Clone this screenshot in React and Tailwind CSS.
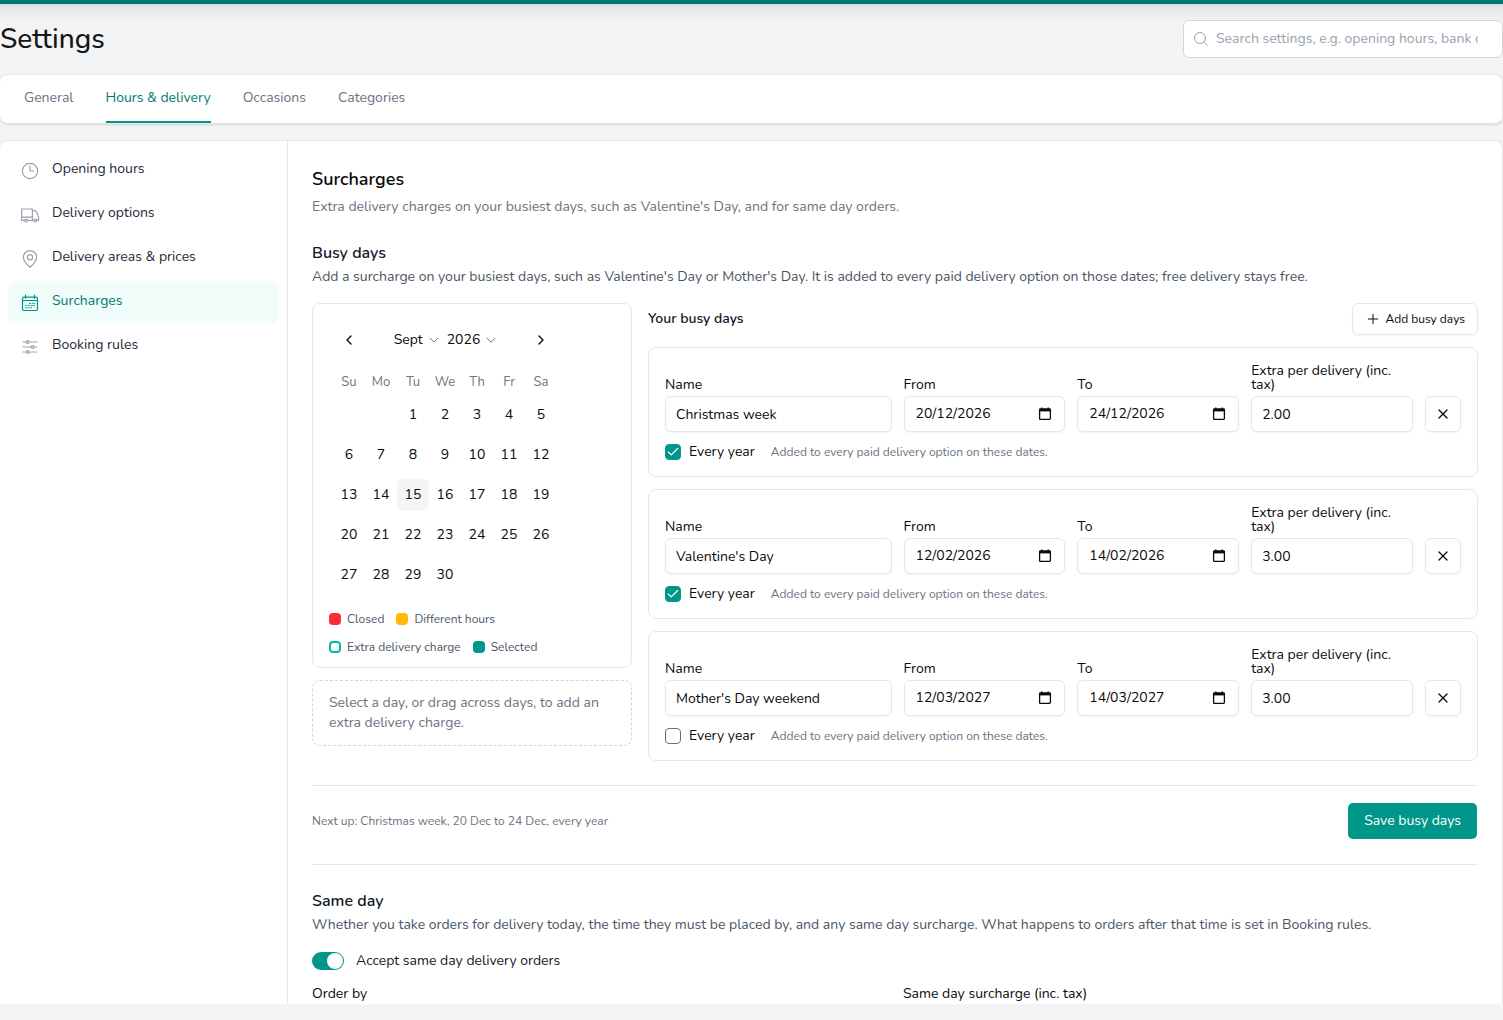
import React, { useState } from "react";
import { Check, ChevronLeft, ChevronRight, Plus, X } from "lucide-react";

const tabs = ["General", "Hours & delivery", "Occasions", "Categories"];

const ClockIcon = () => (
    <>
        <circle cx="10" cy="10" r="7.7" />
        <path d="M10 5.2V10h3.6" />
    </>
);

const TruckIcon = () => (
    <>
        <path d="M4.6 15.4H1.7V4h10.7v11.4H7.6" />
        <path d="M1.7 12.2h10.7" />
        <path d="M12.4 5.6h2c1 0 1.8.6 2.2 1.6l1.9 4.6v3.6h-1.7M13.8 15.4h-1.4" />
        <circle cx="6.1" cy="15.6" r="1.4" />
        <circle cx="15.3" cy="15.6" r="1.4" />
    </>
);

const PinIcon = () => (
    <>
        <path d="M10 18.2c-1.4-1.2-6.6-6.2-6.6-10a6.6 6.6 0 0 1 13.2 0c0 3.8-5.2 8.8-6.6 10z" />
        <circle cx="10" cy="8.2" r="2.6" />
    </>
);

const CalendarIcon = () => (
    <>
        <rect x="2.5" y="4.2" width="15" height="13.3" rx="1.6" />
        <path d="M2.5 7.5h15M5.5 2.2v3M14.5 2.2v3" />
        <path d="M9.5 10.4h5.5M6 12.6h8.5M5.5 14.8h6" strokeWidth="1" strokeDasharray="1 1.6" />
    </>
);

const SlidersIcon = () => (
    <>
        <path d="M3 5h3.4M9 5h8M3 10h8.4M14 10h3M3 15h3.4M9 15h8" />
        <circle cx="7.7" cy="5" r="1.3" />
        <circle cx="12.7" cy="10" r="1.3" />
        <circle cx="7.7" cy="15" r="1.3" />
    </>
);

const sections = [
    { label: "Opening hours", Icon: ClockIcon },
    { label: "Delivery options", Icon: TruckIcon },
    { label: "Delivery areas & prices", Icon: PinIcon },
    { label: "Surcharges", Icon: CalendarIcon },
    { label: "Booking rules", Icon: SlidersIcon },
];

const weekdays = ["Su", "Mo", "Tu", "We", "Th", "Fr", "Sa"];

// September 2026 starts on a Tuesday
const weeks = Array.from({ length: 5 }, (_, w) =>
    Array.from({ length: 7 }, (_, d) => {
        const day = w * 7 + d - 1;
        return day >= 1 && day <= 30 ? day : null;
    })
);
const today = 15;

const initialDays = [
    { id: 1, name: "Christmas week", from: "20/12/2026", to: "24/12/2026", extra: "2.00", everyYear: true },
    { id: 2, name: "Valentine's Day", from: "12/02/2026", to: "14/02/2026", extra: "3.00", everyYear: true },
    { id: 3, name: "Mother's Day weekend", from: "12/03/2027", to: "14/03/2027", extra: "3.00", everyYear: false },
];

const boxClass = "h-9 w-full min-w-0 rounded-md border border-gray-200 bg-white text-sm text-neutral-950 shadow-xs";
const inputClass = boxClass + " px-2.5";

const Field = ({ id, label, children }) => (
    <div className="flex min-w-0 flex-col gap-1">
        <label htmlFor={id} className="text-sm leading-[14px] text-neutral-950">{label}</label>
        {children}
    </div>
);

const DateInput = ({ id, value, onChange }) => (
    <div className="relative">
        <input id={id} type="text" value={value} onChange={onChange} className={boxClass + " pr-9 pb-0.5 pl-[11px]"} />
        <button type="button" aria-label="Open date picker" className="absolute top-2.5 right-3">
            <svg viewBox="0 0 16 16" className="size-4" fill="none" stroke="#0a0a0a">
                <rect x="2.6" y="3" width="10.8" height="10.4" rx="0.8" strokeWidth="1.3" />
                <path d="M2.6 4.2h10.8" strokeWidth="2.4" />
                <path d="M4.8 1.6v2M11.2 1.6v2" strokeWidth="1.4" />
            </svg>
        </button>
    </div>
);

const CalendarSelect = ({ label, value }) => (
    <span className="relative flex items-center">
        <select aria-label={label} defaultValue={value} className="field-sizing-content appearance-none bg-transparent pr-4 text-sm">
            <option>{value}</option>
        </select>
        <svg viewBox="0 0 10 10" className="pointer-events-none absolute right-0 size-2.5" fill="none" stroke="#737373" strokeLinecap="round" strokeLinejoin="round">
            <path d="M1 3.2l4 4 4-4" />
        </svg>
    </span>
);

const MonthCalendar = () => (
    <div className="p-5">
        <div className="flex h-8 w-56 items-center justify-between">
            <button type="button" aria-label="Previous month" className="flex size-8 items-center justify-center">
                <ChevronLeft className="size-4" />
            </button>
            <div className="flex items-center gap-2">
                <CalendarSelect label="Month" value="Sept" />
                <CalendarSelect label="Year" value="2026" />
            </div>
            <button type="button" aria-label="Next month" className="flex size-8 items-center justify-center">
                <ChevronRight className="size-4" />
            </button>
        </div>
        <table className="mt-[17px] block w-56">
            <thead className="block">
                <tr className="flex">
                    {weekdays.map((d) => (
                        <th key={d} className="w-8 text-[13px] leading-[18px] font-normal text-neutral-500">{d}</th>
                    ))}
                </tr>
            </thead>
            <tbody className="block">
                {weeks.map((week, i) => (
                    <tr key={i} className="mt-2 flex">
                        {week.map((day, j) => (
                            <td key={j} className="size-8 p-0">
                                {day && (
                                    <button type="button" className={"size-8 rounded-md text-sm " + (day === today ? "bg-neutral-100" : "")}>
                                        {day}
                                    </button>
                                )}
                            </td>
                        ))}
                    </tr>
                ))}
            </tbody>
        </table>
    </div>
);

const Legend = ({ swatch, label }) => (
    <span className="flex items-center gap-1.5">
        <span className={"size-3 rounded-sm " + swatch}></span>
        {label}
    </span>
);

const BusyDay = ({ day, onUpdate, onRemove }) => {
    const id = "busy-" + day.id;
    return (
        <div className="rounded-lg border border-gray-200 p-4">
            <div className="grid grid-cols-[1.4fr_1fr_1fr_1fr_36px] items-end gap-3">
                <Field id={id + "-name"} label="Name">
                    <input id={id + "-name"} type="text" value={day.name} onChange={(e) => onUpdate({ name: e.target.value })} className={inputClass} />
                </Field>
                <Field id={id + "-from"} label="From">
                    <DateInput id={id + "-from"} value={day.from} onChange={(e) => onUpdate({ from: e.target.value })} />
                </Field>
                <Field id={id + "-to"} label="To">
                    <DateInput id={id + "-to"} value={day.to} onChange={(e) => onUpdate({ to: e.target.value })} />
                </Field>
                <Field id={id + "-extra"} label="Extra per delivery (inc. tax)">
                    <input id={id + "-extra"} type="text" inputMode="decimal" value={day.extra} onChange={(e) => onUpdate({ extra: e.target.value })} className={inputClass} />
                </Field>
                <button type="button" aria-label={"Remove " + day.name} onClick={onRemove} className="flex size-9 items-center justify-center rounded-md border border-gray-200 shadow-xs">
                    <X className="size-4" strokeWidth={1.8} />
                </button>
            </div>
            <div className="mt-3 flex h-4 items-center gap-4">
                <label className="flex items-center gap-2 text-sm leading-4 text-neutral-950">
                    <span className="relative size-4">
                        <input
                            type="checkbox"
                            checked={day.everyYear}
                            onChange={(e) => onUpdate({ everyYear: e.target.checked })}
                            className="block size-4 appearance-none rounded-sm border border-gray-500 bg-white checked:border-teal-600 checked:bg-teal-600"
                        />
                        {day.everyYear && <Check className="pointer-events-none absolute top-px left-px size-3.5 text-white" />}
                    </span>
                    Every year
                </label>
                <span className="text-xs text-gray-500">Added to every paid delivery option on these dates.</span>
            </div>
        </div>
    );
};

const App = () => {
    const [tab, setTab] = useState("Hours & delivery");
    const [days, setDays] = useState(initialDays);
    const [sameDay, setSameDay] = useState(true);

    const updateDay = (id, values) => {
        setDays((prev) => prev.map((d) => (d.id === id ? { ...d, ...values } : d)));
    };

    const addDay = () => {
        setDays((prev) => [...prev, { id: Date.now(), name: "", from: "", to: "", extra: "", everyYear: false }]);
    };

    return (
        <div className="flex h-screen flex-col bg-gray-100 pb-4 font-['Nunito','Lato',sans-serif] text-neutral-950">
            <div className="h-1 shrink-0 bg-teal-700"></div>

            <header className="flex shrink-0 items-center justify-between bg-[linear-gradient(#dcdee0,#e6e8ea_5px,#f3f4f6_20px)] py-4">
                <h1 className="text-[28px] leading-9 font-medium text-neutral-900">Settings</h1>
                <div className="relative w-80">
                    <svg viewBox="0 0 16 16" className="absolute top-[11px] left-[10px] size-4" fill="none" stroke="#99a1af" strokeLinecap="round">
                        <circle cx="7" cy="7" r="5.5" />
                        <path d="M11 11l3.5 3.5" />
                    </svg>
                    <input
                        type="text"
                        aria-label="Search settings"
                        placeholder="Search settings, e.g. opening hours, bank details"
                        className="h-[38px] w-full rounded-md border border-gray-300 bg-white pr-6 pb-0.5 pl-8 text-sm placeholder:text-gray-400"
                    />
                </div>
            </header>

            <nav className="flex shrink-0 gap-8 rounded-lg border border-l-0 border-gray-200 bg-white px-6 shadow-sm">
                {tabs.map((t) => (
                    <a
                        key={t}
                        href="#"
                        onClick={() => setTab(t)}
                        className={"h-12 border-b-2 pt-[13px] text-sm " + (t === tab ? "border-teal-600 text-teal-700" : "border-transparent text-gray-500")}
                    >
                        {t}
                    </a>
                ))}
            </nav>

            <div className="mt-4 flex min-h-0 flex-1 overflow-hidden rounded-t-lg border border-b-0 border-l-0 border-gray-200 bg-white">
                <aside className="flex w-72 shrink-0 flex-col gap-0.5 border-r border-gray-200 p-2">
                    {sections.map(({ label, Icon }) => (
                        <a
                            key={label}
                            href="#"
                            className={"flex gap-3 rounded-md px-3 py-2.5 text-sm " + (label === "Surcharges" ? "bg-teal-50 text-teal-700" : "text-gray-800")}
                        >
                            <svg
                                viewBox="0 0 20 20"
                                className={"mt-0.5 size-5 " + (label === "Surcharges" ? "text-teal-600" : "text-gray-400")}
                                fill="none"
                                stroke="currentColor"
                                strokeWidth="1.2"
                                strokeLinecap="round"
                                strokeLinejoin="round"
                            >
                                <Icon />
                            </svg>
                            {label}
                        </a>
                    ))}
                </aside>

                <main className="min-w-0 flex-1 overflow-hidden p-6">
                    <h2 className="text-lg leading-7 font-semibold">Surcharges</h2>
                    <p className="mt-1 text-sm text-gray-500">Extra delivery charges on your busiest days, such as Valentine's Day, and for same day orders.</p>

                    <section className="mt-6">
                        <h3 className="text-base font-semibold text-gray-900">Busy days</h3>
                        <p className="mt-0.5 text-sm text-gray-600">Add a surcharge on your busiest days, such as Valentine's Day or Mother's Day. It is added to every paid delivery option on those dates; free delivery stays free.</p>

                        <div className="mt-4 flex items-start gap-4">
                            <div className="flex w-80 shrink-0 flex-col gap-3">
                                <div className="rounded-lg border border-gray-200">
                                    <MonthCalendar />
                                    <div className="flex flex-wrap gap-3 px-4 pb-3 text-xs text-gray-600">
                                        <Legend swatch="bg-red-500" label="Closed" />
                                        <Legend swatch="bg-amber-400" label="Different hours" />
                                        <Legend swatch="border-2 border-teal-500" label="Extra delivery charge" />
                                        <Legend swatch="bg-teal-600" label="Selected" />
                                    </div>
                                </div>
                                <p className="rounded-lg border border-dashed border-gray-300 px-4 py-3 text-sm text-gray-500">
                                    Select a day, or drag across days, to add an extra delivery charge.
                                </p>
                            </div>

                            <div className="flex min-w-0 flex-1 flex-col gap-3">
                                <div className="flex items-center justify-between">
                                    <h4 className="text-sm font-semibold text-gray-900">Your busy days</h4>
                                    <button type="button" onClick={addDay} className="flex h-8 items-center gap-1 rounded-md border border-gray-200 px-3 text-xs shadow-xs">
                                        <Plus className="size-4" strokeWidth={1.5} />
                                        Add busy days
                                    </button>
                                </div>
                                {days.map((day) => (
                                    <BusyDay
                                        key={day.id}
                                        day={day}
                                        onUpdate={(values) => updateDay(day.id, values)}
                                        onRemove={() => setDays((prev) => prev.filter((d) => d.id !== day.id))}
                                    />
                                ))}
                            </div>
                        </div>

                        <div className="mt-6 flex items-center justify-between border-t border-gray-200 pt-4">
                            <p className="text-xs text-gray-500">Next up: Christmas week, 20 Dec to 24 Dec, every year</p>
                            <button type="button" className="h-[38px] rounded-md border border-transparent bg-teal-600 bg-clip-padding px-4 text-sm text-white">
                                Save busy days
                            </button>
                        </div>
                    </section>

                    <section className="mt-6 border-t border-gray-200 pt-6">
                        <h3 className="text-base font-semibold text-gray-900">Same day</h3>
                        <p className="mt-0.5 text-sm text-gray-600">Whether you take orders for delivery today, the time they must be placed by, and any same day surcharge. What happens to orders after that time is set in Booking rules.</p>

                        <label className="mt-4 flex items-center gap-3 text-sm text-gray-900">
                            <input
                                type="checkbox"
                                role="switch"
                                checked={sameDay}
                                onChange={(e) => setSameDay(e.target.checked)}
                                className="flex h-[18px] w-8 appearance-none items-center rounded-full bg-gray-300 px-px before:size-4 before:rounded-full before:bg-white checked:justify-end checked:bg-teal-600"
                            />
                            Accept same day delivery orders
                        </label>

                        <div className="mt-4 grid grid-cols-2 gap-4">
                            <div className="flex flex-col gap-2">
                                <label htmlFor="order-by" className="text-sm leading-[14px]">Order by</label>
                                <input id="order-by" type="text" className={inputClass} />
                            </div>
                            <div className="flex flex-col gap-2">
                                <label htmlFor="same-day-extra" className="text-sm leading-[14px]">Same day surcharge (inc. tax)</label>
                                <input id="same-day-extra" type="text" className={inputClass} />
                            </div>
                        </div>
                    </section>
                </main>
            </div>
        </div>
    );
};

export default App;
